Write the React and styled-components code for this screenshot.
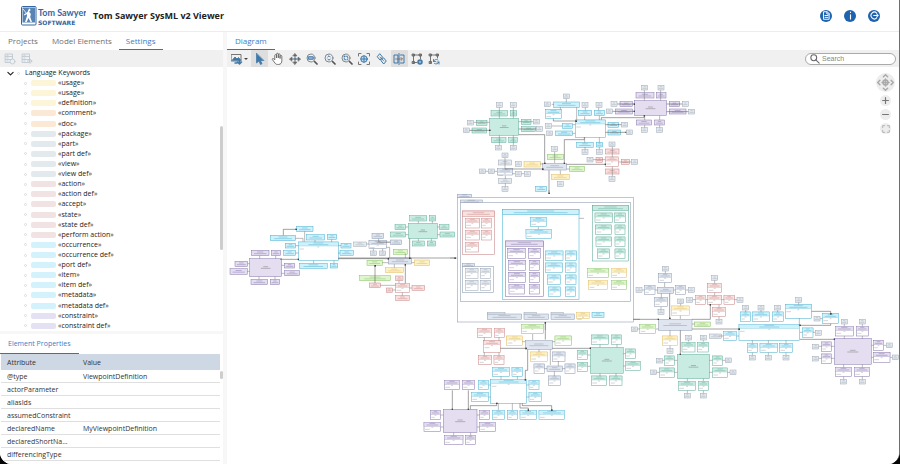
import React from "react";
import styled, { createGlobalStyle } from "styled-components";

const Global = createGlobalStyle`
  * { box-sizing: border-box; }
  html, body, #root { height: 100%; margin: 0; }
  body { background: #050505; font-family: "Open Sans", "Noto Sans", sans-serif; font-size: 7px; color: #333; }
  button, input { font: inherit; color: inherit; border: 0; padding: 0; background: none; }
  ul { list-style: none; margin: 0; padding: 0; }
`;

const Window = styled.div`
  display: flex;
  flex-direction: column;
  height: 100vh;
  background: #fff;
  border-right: 1px solid #6f6f6f;
  border-radius: 0 0 12px 12px;
  overflow: hidden;
`;
const Header = styled.header`
  display: flex;
  align-items: center;
  flex: 0 0 32px;
  padding: 0 19px 0 21px;
  border-bottom: 1px solid #ececec;
`;
const Title = styled.h1`
  margin: 0 auto 0 7px;
  font-size: 9px;
  line-height: 14px;
  font-weight: 700;
  color: #222;
`;
const HeaderActions = styled.div`
  display: flex;
  gap: 12px;
`;
const RoundButton = styled.button`
  width: 12px;
  height: 12px;
  border-radius: 50%;
  background: #1f62ae;
  display: grid;
  place-items: center;
`;
const Body = styled.div`
  flex: 1;
  min-height: 0;
  display: grid;
  grid-template-columns: 223px 1fr;
  gap: 4px;
  background: #f7f7f8;
`;
const Sidebar = styled.aside`
  display: flex;
  flex-direction: column;
  gap: 3px;
  min-height: 0;
`;
const TreePanel = styled.section`
  flex: 1;
  min-height: 0;
  display: flex;
  flex-direction: column;
  background: #fff;
`;
const TabBar = styled.div`
  display: flex;
  flex: none;
  height: ${(p) => p.$height || 18}px;
  padding-left: ${(p) => p.$indent || 0}px;
  background: #fff;
`;
const Tab = styled.button`
  padding: 0 ${(p) => p.$gap || 8}px;
  font-size: ${(p) => p.$size || 8}px;
  line-height: 12px;
  white-space: nowrap;
  color: ${(p) => (p.$active ? "#3d7cc9" : "#707070")};
  border-bottom: 1px solid ${(p) => (p.$active ? "#2f72c4" : "transparent")};
`;
const Toolbar = styled.div`
  display: flex;
  align-items: center;
  flex: 0 0 17px;
  padding: 0 3px 0 ${(p) => p.$start}px;
  background: #f0f0f0;
`;
const ToolButton = styled.button`
  flex: 1;
  height: 17px;
  display: grid;
  place-items: center;
  border-radius: 1px;
  background: ${(p) => (p.$active ? "#dedede" : "transparent")};
`;
const ToolGroup = styled.div`
  display: flex;
  width: ${(p) => p.$width}px;
  flex: none;
`;
const TreeArea = styled.div`
  flex: 1;
  min-height: 0;
  display: flex;
`;
const Tree = styled.ul`
  flex: 1;
  display: flex;
  flex-direction: column;
  && { padding-top: 1px; }
`;
const TreeRow = styled.li`
  flex: 1;
  display: flex;
  align-items: center;
  padding-left: ${(p) => (p.$root ? 7 : 24)}px;
  line-height: 10px;
  color: #222;
`;
const Dot = styled.span`
  width: 3px;
  height: 3px;
  border: 1px solid #ddd;
  border-radius: 50%;
  margin: 0 ${(p) => (p.$root ? "5px 0 3px" : "4px 0 0")};
`;
const Swatch = styled.span`
  width: 25px;
  height: 6px;
  border-radius: 2px;
  margin-right: 2px;
  background: ${(p) => p.$color};
`;
const Scrollbar = styled.div`
  width: 3px;
  flex: none;
  padding-top: ${(p) => p.$top}px;
`;
const Thumb = styled.div`
  height: ${(p) => p.$length}px;
  border-radius: 2px;
  background: #cdcdcd;
`;
const PropertiesPanel = styled.section`
  display: flex;
  flex-direction: column;
  background: #fff;
`;
const TableArea = styled.div`
  display: flex;
  padding: 0 0 3px 1px;
`;
const Table = styled.table`
  flex: 1;
  border-collapse: collapse;
  table-layout: fixed;
  width: 100%;
  th { background: #cdd8e4; height: 16px; font-weight: 400; text-align: left; }
  td { border-bottom: 1px solid #dfdfdf; line-height: 11px; }
  th, td { padding: 1px 0 0 6px; white-space: nowrap; }
  th:first-child { width: 76px; }
`;
const Main = styled.main`
  display: flex;
  flex-direction: column;
  min-width: 0;
  min-height: 0;
  background: #fff;
`;
const Caret = styled.span`
  width: 0;
  border: 2px solid transparent;
  border-top-color: #444;
  margin: 2px 3px 0 -1px;
`;
const SearchBox = styled.label`
  display: flex;
  align-items: center;
  gap: 2px;
  width: 91px;
  height: 12px;
  margin-left: auto;
  padding: 0 4px;
  background: #fff;
  border: 1px solid #aaa;
  border-radius: 6px;
  input { flex: 1; min-width: 0; outline: none; font-family: "Liberation Sans", sans-serif; font-size: 7px; }
  input::placeholder { color: #888; opacity: 1; }
`;
const Canvas = styled.div`
  position: relative;
  flex: 1;
  min-height: 0;
`;
const Drawing = styled.svg`
  display: block;
  width: 100%;
  height: auto;
`;
const NavControls = styled.div`
  position: absolute;
  top: 6px;
  right: 4px;
  display: flex;
  flex-direction: column;
  align-items: center;
  gap: 3px;
`;
const NavButton = styled.button`
  width: ${(p) => p.$size || 11}px;
  height: ${(p) => p.$size || 11}px;
  border-radius: 50%;
  background: #ededed;
  display: grid;
  place-items: center;
`;

const BLUE = "#3f78a8";
const GREY = "#666";

const Icon = ({ size = 12, w = 1.5, color = GREY, children }) => (
  <svg width={size} height={size} viewBox="0 0 24 24" fill="none" stroke={color} strokeWidth={w} strokeLinecap="round" strokeLinejoin="round" aria-hidden="true">
    {children}
  </svg>
);

const Lens = ({ children }) => (
  <Icon size={12} w={2}>
    <circle cx="10" cy="10" r="8" stroke="#808890" />
    <path d="M17 17l5 5" stroke="#555" strokeWidth="3.4" />
    <g stroke={BLUE} strokeWidth="2">{children}</g>
  </Icon>
);

const tools = [
  ["Select", true, <Icon size={12}><path d="M5 1v19l5-4 3 7 3-1.5-3-6.5h6z" fill={BLUE} stroke={BLUE} /></Icon>],
  ["Pan", false, <Icon size={13} w={1.7}><path d="M7 14V6.5a1.6 1.6 0 0 1 3.2 0V11 4a1.6 1.6 0 0 1 3.3 0v7-6a1.6 1.6 0 0 1 3.2 0v7-4a1.6 1.6 0 0 1 3.3 0v8c0 4-2 7-6 7h-2c-3 0-4.5-2-6-4.5L2.5 14c-.8-1.8 1.5-2.8 2.6-1.5z" fill="#fff" /></Icon>],
  ["Move", false, <Icon size={12} w={1}><path d="M12 1l4 5H8zM12 23l4-5H8zM1 12l5-4v8zM23 12l-5-4v8z" fill={GREY} /><path d="M12 6v3M12 15v3M6 12h3M15 12h3" strokeWidth="2" /><circle cx="12" cy="12" r="2" fill={BLUE} stroke={BLUE} /></Icon>],
  ["Marquee zoom", false, <Lens><path d="M5.5 7.5h9v5h-9z" fill="#9bbcd8" /></Lens>],
  ["Interactive zoom", false, <Lens><path d="M7.5 8L10 5.5 12.5 8M7.5 12l2.5 2.5 2.5-2.5" /></Lens>],
  ["Zoom to selection", false, <Lens><path d="M6.5 6.5h7v7h-7z" strokeDasharray="2 2.5" /></Lens>],
  ["Fit in window", false, <Icon w={2}><path d="M1 6V1h5M18 1h5v5M23 18v5h-5M6 23H1v-5" stroke="#777" /><g stroke={BLUE}><circle cx="12" cy="12" r="6.5" fill="#c8dcec" /><path d="M6 12h12M12 6v12" /></g></Icon>],
  ["Link navigation", false, <Icon w={2} color={BLUE}><path d="M8 2l5 6-5 6-5-6zM15.5 10l5 6-5 6-5-6z" /><path d="M8 8l7.5 8" stroke={GREY} strokeWidth="1.5" /></Icon>],
  ["Overview", true, <Icon w={2} color={BLUE}><path d="M9 4H2v16h7zM15 4h7v16h-7M12 1v22" /><path d="M5 12h13M16 9l3 3-3 3" stroke={GREY} strokeWidth="1.5" /></Icon>],
  ["Layout", false, <Icon w={1.8}><path d="M5 4h14M5 18V5M5 19h7M19 5v7" /><path d="M3 2h4v4H3zM17 2h4v4h-4zM3 17h4v4H3z" fill="#777" /><circle cx="18" cy="18" r="4" stroke={BLUE} fill="#8fb3d2" strokeWidth="3" /></Icon>],
  ["Incremental layout", false, <Icon w={1.8}><path d="M5 4h14M5 18V5M19 5v5" /><path d="M3 2h4v4H3zM17 2h4v4h-4zM3 17h4v4H3z" fill="#777" /><path d="M11 13v4h4M11 17c2-5 7-5 9-3M22 22v-4h-4M22 18c-1 4-6 5-9 3" stroke={BLUE} /></Icon>],
];

const groups = [
  ["#fdf5d8", ["usage", "usage", "definition"]],
  ["#fbe9d6", ["comment", "doc"]],
  ["#e3eaee", ["package", "part", "part def", "view", "view def"]],
  ["#f1e2e3", ["action", "action def", "accept", "state", "state def", "perform action"]],
  ["#d4f2fc", ["occurrence", "occurrence def", "port def", "item", "item def", "metadata", "metadata def"]],
  ["#e4e1f2", ["constraint", "constraint def"]],
];

const attributes = [
  ["@type", "ViewpointDefinition"],
  ["actorParameter", ""],
  ["aliasIds", ""],
  ["assumedConstraint", ""],
  ["declaredName", "MyViewpointDefinition"],
  ["declaredShortNa...", ""],
  ["differencingType", ""],
];

const palette = {
  p: ["#8676ac", "#e4def0"],
  c: ["#48b0cf", "#cff1fb"],
  t: ["#62ab9b", "#c9ece2"],
  r: ["#c98384", "#f8e1e1"],
  g: ["#86bf62", "#dff5ce"],
  y: ["#dfbc60", "#fdf1c8"],
  b: ["#8b98ae", "#dfe6f0"],
  s: ["#9ba6b3", "#e6ebf0"],
  w: ["#8694ab", "none"],
  k: ["#3fb2d2", "none"],
  v: ["#7d6ba3", "none"],
  e: ["#55a795", "none"],
  o: ["#c47f80", "none"],
};

/* Each cluster lists filled nodes, titled cards, and connector paths at three units per pixel. */
const clusters = [
  {
    at: [225, 190],
    wires: "M165 208H220M175 136V118H213M212 145H234V155M239 124V155M340 204H690M340 206H490M461 146V156H495M455 157H497M484 172H494V203M554 145V205M450 279V227M466 286H512M541 280V224M508 233V222M472 218H490M560 218H568M541 190V205M104 197V206M152 197V206M68 221H74M67 244H74M170 226H179M170 250H179M102 260V268M150 260V268M270 150V156M320 148V156M212 167H220M212 189H220M340 167H348M340 189H345M266 212V220M327 212V220M580 93V100M622 93V100M542 111H550M542 134H550M637 111H643M637 134H645M580 146V153M619 146V153M445 176V183M473 176V183M424 162H432M522 272V280M502 300H512M553 294H561M532 308V317",
    boxes: [
      ["p", 74, 206, 96, 54], ["p", 79, 181, 53, 16], ["p", 139, 181, 28, 16], ["p", 30, 214, 38, 16], ["p", 15, 236, 52, 17], ["p", 179, 220, 30, 14], ["p", 179, 242, 45, 15], ["p", 78, 268, 50, 16], ["p", 136, 268, 28, 16],
      ["c", 215, 109, 49, 16], ["c", 136, 136, 76, 16], ["c", 245, 134, 54, 16], ["c", 307, 133, 28, 15], ["c", 181, 160, 31, 14], ["c", 176, 182, 36, 14], ["c", 348, 160, 30, 14], ["c", 345, 182, 40, 14], ["c", 223, 220, 84, 15], ["c", 316, 220, 22, 14],
      ["t", 550, 100, 87, 46], ["t", 554, 77, 51, 16], ["t", 613, 77, 19, 16], ["t", 510, 104, 32, 15], ["t", 497, 126, 45, 15], ["t", 643, 104, 29, 15], ["t", 645, 126, 44, 15], ["t", 562, 153, 36, 15], ["t", 607, 153, 25, 15],
      ["b", 441, 130, 35, 16], ["b", 497, 150, 33, 14], ["s", 386, 156, 38, 13], ["s", 436, 183, 18, 14], ["s", 464, 183, 18, 14], ["b", 490, 204, 70, 18],
      ["g", 505, 178, 42, 15], ["g", 426, 211, 46, 15], ["g", 404, 257, 92, 15], ["y", 568, 210, 46, 17], ["y", 481, 233, 54, 15],
      ["r", 433, 279, 34, 14], ["r", 484, 294, 18, 13], ["r", 512, 258, 22, 14], ["r", 561, 287, 38, 14], ["r", 512, 317, 41, 14],
    ],
    cards: [["c", 220, 156, 120, 56], ["b", 432, 152, 52, 24], ["r", 512, 280, 41, 28]],
  },
  {
    at: [450, 75],
    wires: "M206 179H284V265M310 131V138H378M380 97V137M454 134V128H583V122M403 186V194H343V265M349 268H466M165 282H278M297 286V355M314 230V264M331 298V286M359 282H350M270 267H280M404 124V135M448 122V135M404 187V203M448 187V203M305 153H338M584 122V135M629 122V135M166 312V302M148 96V130M190 96V130M70 142H119M57 166H119M206 140H255M206 162H270M148 181V218M190 181V218M406 90V106M446 90V106M349 65V82M305 88H312M331 96V104M376 149H368M376 175H368M466 149H518M466 172H528M583 38V77M632 38V77M500 87H553M485 109H553M650 87H706M650 110H720M405 216V230M448 216V230M584 150V165M629 150V165M104 289H142M187 296H232M165 247V282M166 325V338M487 214V246M428 254H466M506 261H552M487 275V312",
    boxes: [
      ["t", 119, 130, 87, 51], ["t", 123, 107, 50, 16], ["t", 181, 107, 19, 16], ["t", 79, 136, 32, 15], ["t", 66, 159, 44, 15], ["t", 214, 133, 29, 15], ["t", 214, 155, 43, 15], ["t", 124, 188, 44, 15], ["t", 176, 188, 26, 15],
      ["c", 311, 81, 77, 16], ["c", 385, 106, 40, 16], ["c", 433, 106, 30, 16], ["c", 338, 146, 30, 14], ["c", 317, 168, 51, 14], ["c", 474, 142, 32, 15], ["c", 474, 165, 38, 15], ["c", 380, 202, 50, 15], ["c", 439, 202, 19, 14], ["c", 257, 334, 33, 15],
      ["p", 553, 77, 97, 44], ["p", 558, 53, 54, 16], ["p", 619, 53, 29, 16], ["p", 510, 80, 37, 15], ["p", 497, 102, 50, 15], ["p", 658, 80, 31, 15], ["p", 658, 102, 50, 15], ["p", 559, 135, 46, 15], ["p", 614, 135, 29, 15],
      ["b", 278, 265, 72, 20], ["s", 145, 255, 40, 15], ["s", 146, 311, 39, 15], ["y", 222, 259, 49, 17], ["y", 304, 298, 54, 16], ["g", 292, 238, 48, 16], ["g", 358, 274, 46, 16],
      ["r", 466, 222, 41, 15], ["r", 438, 247, 20, 15], ["r", 514, 253, 24, 15], ["r", 466, 282, 41, 15],
    ],
    dots: [[148, 90], [190, 90], [61, 143], [49, 166], [259, 140], [268, 162], [145, 218], [190, 218], [349, 64], [292, 88], [405, 90], [447, 90], [295, 153], [299, 175], [524, 149], [538, 172], [405, 231], [448, 231], [584, 38], [633, 38], [492, 87], [478, 109], [706, 87], [725, 110], [583, 165], [629, 165], [205, 267], [314, 222], [331, 327], [165, 241], [165, 342], [97, 289], [124, 289], [205, 297], [232, 297], [486, 208], [420, 254], [554, 261], [486, 312]],
    cards: [["c", 376, 135, 90, 52], ["c", 286, 104, 49, 27], ["b", 142, 280, 45, 20], ["r", 466, 246, 40, 29]],
  },
  {
    at: [450, 190],
    wires: "M0 204H22M265 111V118M387 85H402M297 0V12M286 420V396M550 388H570",
    frames: [["w", 22, 22, 528, 374], ["w", 31, 38, 511, 296], ["w", 37, 229, 94, 79], ["k", 157, 58, 230, 271], ["v", 166, 153, 114, 167], ["e", 428, 46, 107, 167], ["o", 37, 63, 97, 131]],
    boxes: [["b", 22, 13, 43, 9], ["b", 31, 30, 66, 8], ["b", 37, 221, 37, 8], ["c", 157, 58, 230, 16], ["p", 166, 153, 114, 16], ["t", 428, 46, 107, 16], ["r", 37, 63, 97, 16], ["b", 112, 372, 103, 16], ["b", 222, 372, 73, 16], ["b", 303, 372, 70, 16], ["s", 112, 367, 53, 5], ["s", 222, 367, 38, 5], ["s", 303, 367, 37, 5], ["c", 426, 367, 36, 15]],
    cards: [
      ["r", 46, 85, 42, 29], ["r", 94, 85, 31, 29], ["r", 46, 121, 42, 29], ["r", 94, 121, 31, 29], ["r", 46, 157, 40, 29],
      ["s", 46, 236, 38, 29], ["s", 91, 236, 31, 29], ["s", 46, 272, 38, 29], ["s", 91, 272, 31, 29],
      ["c", 241, 82, 49, 28], ["c", 228, 118, 77, 27],
      ["p", 172, 176, 55, 29], ["p", 236, 176, 36, 29], ["p", 175, 212, 51, 29], ["p", 238, 212, 31, 29], ["p", 175, 248, 51, 29], ["p", 238, 248, 31, 29], ["p", 177, 283, 46, 29], ["p", 238, 283, 31, 29],
      ["c", 286, 183, 53, 28], ["c", 346, 183, 33, 28], ["c", 286, 219, 51, 28], ["c", 347, 219, 31, 28], ["c", 292, 255, 40, 28], ["c", 347, 255, 31, 28], ["c", 295, 291, 37, 28], ["c", 347, 291, 30, 28],
      ["t", 435, 69, 52, 28], ["t", 493, 69, 34, 28], ["t", 437, 105, 48, 28], ["t", 495, 105, 30, 28], ["t", 438, 141, 46, 28], ["t", 495, 141, 30, 28], ["t", 442, 177, 37, 28], ["t", 495, 177, 30, 28],
      ["g", 412, 235, 63, 28], ["y", 484, 235, 45, 27], ["y", 416, 271, 56, 28], ["g", 484, 271, 45, 28], ["y", 379, 367, 40, 18],
    ],
  },
  {
    at: [420, 320],
    wires: "M376 59V8M338 42V60M241 85H318M397 85H511M323 89V151H316V179M391 89V135M307 65H316M405 65H397M357 88V96M415 123V139M403 154V168M97 211V268M145 211V268M151 268V257H230V250M235 250V270M277 250V270M300 250V264H325V270M307 250V257H395V270M193 52V62M237 52V62M193 97V106M237 97V106M243 169V178M292 169V178M206 195H212M206 231H212M320 195H327M320 231H327M62 285H70M62 321H70M171 285H178M171 321H178M101 338V346M152 338V346M540 73V82M591 73V82M503 105H511M503 139H511M610 101H616M610 138H616M540 160V168M588 160V168M373 146H381M427 146H435",
    boxes: [["p", 70, 268, 101, 70], ["t", 511, 82, 99, 78], ["b", 316, 62, 81, 26], ["b", 381, 138, 46, 16]],
    cards: [
      ["r", 172, 25, 43, 27], ["r", 223, 25, 30, 27], ["r", 191, 62, 50, 35], ["r", 176, 106, 38, 28], ["r", 222, 106, 30, 28],
      ["g", 304, 13, 66, 28], ["g", 405, 48, 49, 28], ["y", 260, 48, 48, 28], ["y", 331, 96, 51, 28],
      ["b", 397, 96, 38, 28], ["b", 342, 132, 31, 28], ["b", 435, 132, 30, 28], ["b", 385, 168, 37, 28],
      ["t", 514, 45, 51, 28], ["t", 574, 45, 31, 28], ["t", 472, 91, 30, 28], ["t", 472, 127, 30, 28], ["t", 616, 87, 31, 28], ["t", 616, 124, 46, 28], ["t", 514, 168, 46, 28], ["t", 569, 168, 37, 28],
      ["c", 212, 178, 108, 72], ["c", 217, 142, 52, 27], ["c", 276, 142, 32, 27], ["c", 175, 181, 31, 28], ["c", 154, 217, 52, 28], ["c", 327, 181, 30, 28], ["c", 327, 217, 38, 28], ["c", 217, 271, 37, 27], ["c", 262, 271, 30, 27], ["c", 300, 271, 49, 27], ["c", 357, 271, 77, 27],
      ["p", 73, 181, 46, 28], ["p", 127, 181, 37, 28], ["p", 31, 271, 31, 27], ["p", 12, 307, 50, 27], ["p", 178, 271, 31, 27], ["p", 178, 307, 49, 27], ["p", 73, 346, 56, 28], ["p", 136, 346, 31, 28],
    ],
  },
  {
    at: [630, 255],
    wires: "M10 193H85M104 83V96M94 128V115M119 115V190M151 182V192M186 193H241V149M186 222H327M120 243V226M151 226V298M78 222H85M194 207H186M510 253H613M508 190V213M545 169H602V176M602 206V211H510M106 46V55M35 105H43M75 105H83M131 105H136M167 105H182M93 156V168M152 141V152M20 222H29M120 272V286M176 250V260M220 250V260M90 316H103M133 316H142M72 352H88M133 352H142M238 316H247M278 316H294M238 352H247M293 352H308M172 371V378M220 371V378M172 407V420M220 407V420M254 75V85M254 113V121M180 134H196M227 134H233M274 134H282M313 134H328M267 149V157M267 185V198M347 164V171M393 164V171M443 164V171M506 138V149M265 243H280M320 243H327M510 232H517M549 232H565M367 256V265M415 256V265M468 256V265M367 293V306M415 293V306M468 293V306M570 191H577M643 205V214M697 205V214M643 243V251M697 243V251M565 274H574M565 310H574M604 274H613M604 310H613M724 271H731M724 307H730M761 271H778M780 307H795M641 328V337M697 328V337M641 365V380M697 365V380",
    boxes: [["b", 85, 193, 101, 33], ["b", 83, 97, 48, 18], ["t", 142, 298, 97, 73], ["p", 613, 250, 111, 78], ["g", 194, 201, 47, 14], ["s", 238, 237, 36, 13]],
    dots: [[106, 41], [27, 105], [184, 105], [93, 171], [152, 139], [13, 223], [120, 288], [176, 248], [220, 248], [88, 317], [71, 352], [295, 316], [309, 352], [172, 422], [220, 422], [254, 69], [179, 135], [330, 135], [267, 200], [347, 158], [393, 158], [443, 158], [506, 135], [565, 234], [367, 308], [415, 308], [468, 308], [561, 191], [643, 200], [697, 200], [557, 275], [557, 311], [778, 271], [796, 307], [641, 380], [697, 380]],
    cards: [
      ["b", 86, 55, 39, 28], ["b", 43, 91, 32, 28], ["b", 136, 91, 31, 28], ["b", 73, 127, 39, 28], ["y", 124, 153, 55, 28], ["g", 29, 208, 48, 28], ["y", 97, 243, 46, 28],
      ["t", 156, 262, 39, 29], ["t", 202, 262, 34, 29], ["t", 103, 303, 31, 28], ["t", 88, 339, 45, 28], ["t", 247, 303, 31, 28], ["t", 247, 339, 46, 28], ["t", 145, 379, 52, 28], ["t", 205, 379, 31, 28],
      ["r", 233, 85, 42, 27], ["r", 196, 121, 31, 27], ["r", 232, 121, 42, 28], ["r", 282, 121, 31, 27], ["r", 247, 157, 40, 27],
      ["c", 327, 208, 182, 48], ["c", 331, 171, 31, 29], ["c", 367, 171, 52, 29], ["c", 427, 171, 34, 29], ["c", 466, 149, 78, 41], ["c", 577, 176, 49, 29], ["c", 280, 229, 40, 27], ["c", 517, 219, 32, 28], ["c", 352, 265, 30, 28], ["c", 390, 265, 52, 28], ["c", 449, 265, 39, 28],
      ["p", 616, 214, 54, 29], ["p", 679, 214, 36, 29], ["p", 574, 261, 31, 28], ["p", 574, 297, 31, 28], ["p", 730, 257, 31, 29], ["p", 730, 293, 50, 29], ["p", 616, 337, 49, 28], ["p", 673, 337, 46, 28],
    ],
  },
];

/* Short strokes that stand for a label too small to read at this zoom. */
const Caption = ({ cx, y, len, color }) => (
  <path
    d={`M${cx - len / 4} ${y - 3}h${len / 2}M${cx - len / 2} ${y + 2}h${len}`}
    stroke={color} strokeWidth="2" strokeOpacity=".7"
  />
);

const Node = ({ tone, x, y, w, h }) => {
  const [line, fill] = palette[tone];
  const big = h > 40;
  return (
    <g>
      <rect x={x} y={y} width={w} height={h} fill={fill} stroke={line} strokeWidth="1.5" />
      {h > 5 && <Caption cx={x + w / 2} y={y + h / 2} len={big ? w * 0.3 : w * 0.7} color={big ? "#777" : line} />}
    </g>
  );
};

const Card = ({ tone, x, y, w, h }) => {
  const [line, fill] = palette[tone];
  return (
    <g>
      <rect x={x} y={y} width={w} height={h} fill="#fff" stroke={line} strokeWidth="1.6" />
      <rect x={x} y={y} width={w} height={12} fill={fill} stroke={line} strokeWidth=".8" />
      <Caption cx={x + w / 2} y={y + 6} len={Math.min(w * 0.7, 60)} color={line} />
      <path d={`M${x + w / 2 - 3} ${y + 15}h6M${x + 3} ${y + 21}h${Math.min(w / 3, 14)}`} stroke="#888" strokeWidth="1.5" strokeOpacity=".7" />
    </g>
  );
};

/* Only the routed connectors end in an arrow head; one-step stubs are plain. */
const reach = (segment) => {
  const [x, y] = segment.split(" ").map(parseFloat);
  const steps = [...segment.matchAll(/([HV])(\d+)/g)];
  return steps.reduce((sum, [, axis, value]) => sum + Math.abs(value - (axis === "H" ? x : y)), 0);
};

const Wires = ({ d }) => (
  <g fill="none" stroke="#777" strokeWidth="1.5">
    {d.split("M").filter(Boolean).map((s) => {
      const routed = reach(s) > 50;
      return <path key={s} d={`M${s}`} stroke={routed ? "#444" : undefined} markerEnd={routed ? "url(#end)" : undefined} />;
    })}
  </g>
);

const Diagram = () => (
  <Drawing viewBox="227 67 672 392" role="img" aria-label="SysML model diagram">
    <defs>
      <marker id="end" markerWidth="6" markerHeight="6" refX="3" refY="3" markerUnits="userSpaceOnUse">
        <rect x="1" y="1" width="5" height="5" fill="#444" />
      </marker>
    </defs>
    {clusters.map((c) => (
      <g key={c.at.join()} transform={`translate(${c.at.join()}) scale(${1 / 3})`}>
        {c.frames?.map(([t, x, y, w, h]) => (
          <rect key={t + x} x={x} y={y} width={w} height={h} fill="none" stroke={palette[t][0]} strokeWidth="1.6" />
        ))}
        {c.cards.map(([t, x, y, w, h]) => <Card key={`${x},${y}`} tone={t} x={x} y={y} w={w} h={h} />)}
        {c.boxes.map(([t, x, y, w, h]) => <Node key={`${x},${y}`} tone={t} x={x} y={y} w={w} h={h} />)}
        <Wires d={c.wires} />
        {c.dots?.map(([x, y]) => <Node key={`${x},${y}`} tone="s" x={x - 9} y={y - 7} w={18} h={14} />)}
      </g>
    ))}
  </Drawing>
);

const Logo = () => (
  <svg width="65" height="20" viewBox="0 0 65 20" role="img" aria-label="Tom Sawyer Software">
    <rect x=".5" y=".5" width="14.5" height="18.5" rx="1" fill="#fff" stroke="#35669f" />
    <path d="M1.5 1.5h12.5v15h-12.5z" fill="#5783b5" />
    <path d="M8 2.5a1.5 1.5 0 1 1-.1 3l2 2.500-.7 3 1.8 5h-1.5l-2-4-1.8 4H4l2-6V8L3.5 9.5 3 8.5 6.5 6z" fill="#fff" />
    <path d="M2 3l4 5M2 17.5h12" stroke="#fff" strokeWidth=".8" />
    <g fill="#35669f" fontWeight="700">
      <text x="17" y="10" fontFamily="Lato, sans-serif" fontSize="9">Tom Sawyer</text>
      <text x="17" y="19" fontFamily="'DejaVu Sans', sans-serif" fontSize="6">SOFTWARE</text>
    </g>
  </svg>
);

const DatabaseIcon = ({ children }) => (
  <Icon size={12} w={1.6} color="#b9c5d0">
    <path d="M3 2h14v17H3zM3 7h14M3 13h14M6 4.5h2M6 10h2M6 16h2" />
    {children}
  </Icon>
);

export default function App() {
  return (
    <Window>
      <Global />
      <Header>
        <Logo />
        <Title>Tom Sawyer SysML v2 Viewer</Title>
        <HeaderActions>
          <RoundButton aria-label="Documentation"><Icon size={9} w={2.5} color="#fff"><path d="M5 2h9l5 5v15H5zM13 2v6h6M8 12h8M8 17h8" /></Icon></RoundButton>
          <RoundButton aria-label="About"><Icon size={9} w={3} color="#fff"><path d="M12 10v11M12 3v1" /></Icon></RoundButton>
          <RoundButton aria-label="Sign out"><Icon size={9} w={2.8} color="#fff"><path d="M18 5.5a9 9 0 1 0 0 13M10 12h12M18 8l4 4-4 4" /></Icon></RoundButton>
        </HeaderActions>
      </Header>
      <Body>
        <Sidebar>
          <TreePanel>
            <TabBar $indent={1}>
              <Tab $gap={7}>Projects</Tab>
              <Tab $gap={7}>Model Elements</Tab>
              <Tab $gap={7} $active>Settings</Tab>
            </TabBar>
            <Toolbar $start={1}>
              <ToolGroup $width={35}>
                <ToolButton aria-label="Save settings"><DatabaseIcon><circle cx="17" cy="17" r="5" fill="#f0f0f0" /></DatabaseIcon></ToolButton>
                <ToolButton aria-label="Load settings"><DatabaseIcon><path d="M13 16h9M18 12l4 4-4 5" /></DatabaseIcon></ToolButton>
              </ToolGroup>
            </Toolbar>
            <TreeArea>
              <Tree>
                <TreeRow $root>
                  <Icon size={7} w={4} color="#222"><path d="M3 8l9 9 9-9" /></Icon>
                  <Dot $root />
                  Language Keywords
                </TreeRow>
                {groups.flatMap(([color, names]) => names.map((name, i) => (
                  <TreeRow key={color + i}>
                    <Dot />
                    <Swatch $color={color} />
                    «{name}»
                  </TreeRow>
                )))}
              </Tree>
              <Scrollbar $top={59}><Thumb $length={124} /></Scrollbar>
            </TreeArea>
          </TreePanel>
          <PropertiesPanel>
            <TabBar $height={20}><Tab $active $size={7}>Element Properties</Tab></TabBar>
            <TableArea>
              <Table>
                <thead><tr><th>Attribute</th><th>Value</th></tr></thead>
                <tbody>
                  {attributes.map(([name, value]) => (
                    <tr key={name}><td>{name}</td><td>{value}</td></tr>
                  ))}
                </tbody>
              </Table>
              <Scrollbar $top={17}><Thumb $length={8} /></Scrollbar>
            </TableArea>
          </PropertiesPanel>
        </Sidebar>
        <Main>
          <TabBar><Tab $active>Diagram</Tab></TabBar>
          <Toolbar $start={2}>
            <ToolGroup $width={16}>
              <ToolButton aria-label="Export image"><Icon size={12} w={1.8}><path d="M1 3h19v13H1z" /><path d="M3 14l5-6 4 4 3-3 4 5z" fill={BLUE} stroke={BLUE} /><path d="M17 13v8M13 18l4 4 4-4M8 20h4" stroke={BLUE} strokeWidth="3" /></Icon></ToolButton>
            </ToolGroup>
            <Caret />
            <ToolGroup $width={192}>
              {tools.map(([label, active, icon]) => (
                <ToolButton key={label} aria-label={label} $active={active}>{icon}</ToolButton>
              ))}
            </ToolGroup>
            <SearchBox>
              <Icon size={10} w={2.5}><circle cx="9" cy="9" r="7" /><path d="M14 14l8 8" /></Icon>
              <input type="search" placeholder="Search" aria-label="Search" />
            </SearchBox>
          </Toolbar>
          <Canvas>
            <Diagram />
            <NavControls>
              <NavButton $size={19} aria-label="Pan"><Icon size={17} w={2} color="#aaa"><path d="M9 4l3-3 3 3M9 20l3 3 3-3M4 9l-3 3 3 3M20 9l3 3-3 3M12 7v10M7 12h10" /><circle cx="12" cy="12" r="3.5" /></Icon></NavButton>
              <NavButton aria-label="Zoom in"><Icon size={7} w={4} color="#777"><path d="M12 2v20M2 12h20" /></Icon></NavButton>
              <NavButton aria-label="Zoom out"><Icon size={7} w={4} color="#777"><path d="M2 12h20" /></Icon></NavButton>
              <NavButton aria-label="Fit"><Icon size={8} w={2.5} color="#aaa"><path d="M2 8V2h6M16 2h6v6M22 16v6h-6M8 22H2v-6" /></Icon></NavButton>
            </NavControls>
          </Canvas>
        </Main>
      </Body>
    </Window>
  );
}
